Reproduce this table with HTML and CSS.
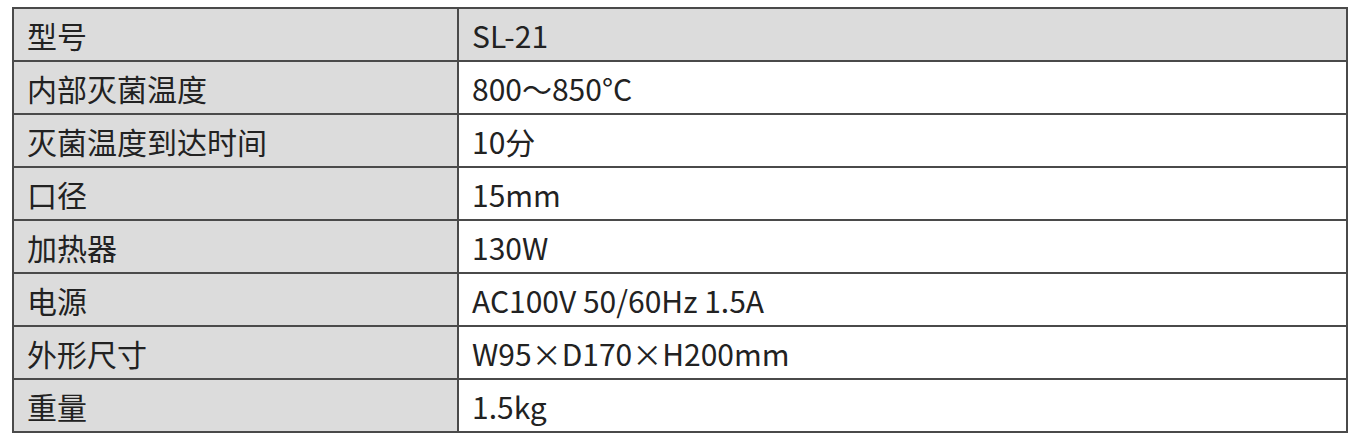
FILE: index.html
```html
<!DOCTYPE html>
<html lang="zh">
<head>
<meta charset="utf-8">
<link rel="stylesheet" href="styles.css">
</head>
<body>
<table class="spec">
  <tr class="head"><th>型号</th><td>SL-21</td></tr>
  <tr><th>内部灭菌温度</th><td>800～850°C</td></tr>
  <tr><th>灭菌温度到达时间</th><td>10分</td></tr>
  <tr><th>口径</th><td>15mm</td></tr>
  <tr><th>加热器</th><td>130W</td></tr>
  <tr><th>电源</th><td>AC100V 50/60Hz 1.5A</td></tr>
  <tr><th>外形尺寸</th><td>W95×D170×H200mm</td></tr>
  <tr><th>重量</th><td>1.5kg</td></tr>
</table>
</body>
</html>
```
FILE: styles.css
```css
html, body {
  margin: 0;
  padding: 0;
  background: #ffffff;
}
body {
  padding: 7px 11px 0 12px;
  font-family: "Noto Sans CJK SC", "Noto Sans", sans-serif;
  color: #222222;
}
.spec {
  width: 1336px;
  border-collapse: collapse;
  border: 2px solid #4a4a4a;
}
.spec th, .spec td {
  border: 2px solid #4a4a4a;
  height: 53px;
  padding: 0 0 0 13px;
  font-size: 30px;
  font-weight: 400;
  text-align: left;
  vertical-align: middle;
  line-height: 1;
  box-sizing: border-box;
}
.spec th {
  width: 445px;
  background: #dcdcdc;
}
.spec td {
  background: #ffffff;
}
.spec .head td {
  background: #dcdcdc;
}
```
